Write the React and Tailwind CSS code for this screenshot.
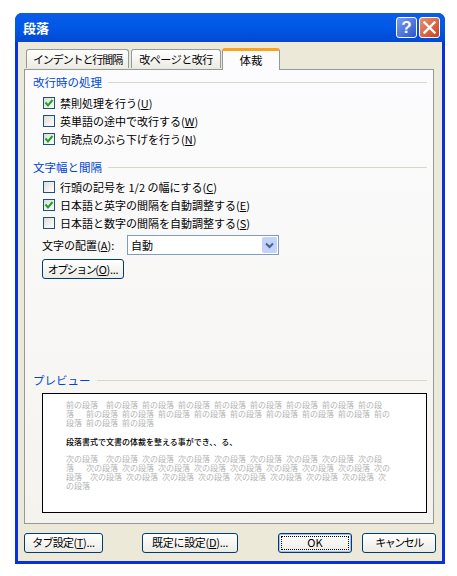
const font = { fontFamily: '"Noto Sans CJK JP", "Liberation Sans", sans-serif' };

function Check({ checked, children }) {
  return (
    <div className="flex h-[18px] items-center pl-[10px]">
      <span className="flex h-[12px] w-[12px] flex-none items-center justify-center border border-[#1c5180] bg-gradient-to-br from-[#dcdcd7] to-white">
        {checked && (
          <svg width="10" height="10" viewBox="0 0 10 10">
            <path d="M1.5 4.5 L4 7.5 L8.5 2" fill="none" stroke="#21a121" strokeWidth="2" />
          </svg>
        )}
      </span>
      <span className="ml-[5px] whitespace-nowrap text-[11px] leading-[18px] text-black">{children}</span>
    </div>
  );
}

function Legend({ children }) {
  return (
    <div className="flex h-[16px] items-center">
      <span className="whitespace-nowrap text-[11.5px] leading-[16px] text-[#0046d5]">{children}</span>
      <span className="ml-[6px] h-px flex-1 bg-[#d8d8c8]" />
    </div>
  );
}

function Btn({ className, children }) {
  return (
    <button className={"flex h-[20px] items-center justify-center whitespace-nowrap rounded-[3px] border border-[#003c74] bg-gradient-to-b from-white to-[#ecebe5] text-[11px] leading-none text-black " + className}>
      {children}
    </button>
  );
}

function U({ children }) {
  return <span className="underline">{children}</span>;
}

function PLine({ children, black }) {
  return (
    <div className={"h-[9px] whitespace-pre text-[8px] leading-[9px] [word-spacing:2.2px] " + (black ? "font-medium text-black" : "text-[#b4b4b4]")}>
      {children}
    </div>
  );
}

export default function App() {
  const a = "前の段落 ";
  const b = "次の段落 ";
  return (
    <div className="h-[576px] w-[457px] overflow-hidden bg-white pl-[15px] pt-[13px]" style={font}>
      <div className="flex h-[551px] w-[430px] flex-col overflow-hidden rounded-t-[7px] bg-[#0831d9] px-[3px] pb-[3px]">
        <div className="-mx-[3px] flex h-[29px] flex-none items-center justify-between bg-gradient-to-b from-[#0a5de8] via-[#0058e6] to-[#0348d0] pl-[8px] pr-[5px]">
          <span className="text-[13px] font-bold leading-none text-white">段落</span>
          <div className="flex gap-[2px]">
            <span className="flex h-[21px] w-[21px] items-center justify-center rounded-[3px] border border-white bg-gradient-to-br from-[#7c9cf0] to-[#2a55cf] text-[17px] font-bold leading-none text-white" style={{ fontFamily: '"Liberation Sans", sans-serif' }}>?</span>
            <span className="flex h-[21px] w-[21px] items-center justify-center rounded-[3px] border border-white bg-gradient-to-br from-[#e8906f] to-[#c8401a]">
              <svg width="13" height="13" viewBox="0 0 13 13">
                <path d="M1.5 1.5 L11.5 11.5 M11.5 1.5 L1.5 11.5" stroke="white" strokeWidth="2.4" strokeLinecap="square" />
              </svg>
            </span>
          </div>
        </div>

        <div className="flex flex-1 flex-col bg-[#ece9d8] px-[6px]">
          <div className="relative z-10 flex h-[27px] flex-none items-end pl-[2px]">
            <div className="mb-px flex h-[19px] w-[103px] items-center justify-center whitespace-nowrap rounded-t-[3px] border border-b-0 border-[#919b9c] bg-gradient-to-b from-white to-[#ecebe5] text-[11px] tracking-[-1.1px] text-black">インデントと行間隔</div>
            <div className="mb-px ml-[2px] flex h-[19px] w-[90px] items-center justify-center whitespace-nowrap rounded-t-[3px] border border-b-0 border-[#919b9c] bg-gradient-to-b from-white to-[#ecebe5] text-[11px] tracking-[-0.5px] text-black">改ページと改行</div>
            <div className="-mb-px ml-px flex h-[22px] w-[58px] items-center justify-center rounded-t-[3px] border-x border-t-[3px] border-x-[#919b9c] border-t-[#f9a31b] bg-[#fcfcfe] text-[11.5px] text-black">体裁</div>
          </div>

          <div className="flex h-[455px] w-[410px] flex-none flex-col border border-[#919b9c] bg-gradient-to-b from-[#fcfcfe] to-[#f4f3ee] pl-[8px] pr-[6px] pt-[4px]">
            <Legend>改行時の処理</Legend>
            <div className="mt-[4px]">
              <Check checked>禁則処理を行う(<U>U</U>)</Check>
              <Check>英単語の途中で改行する(<U>W</U>)</Check>
              <Check checked>句読点のぶら下げを行う(<U>N</U>)</Check>
            </div>

            <div className="mt-[11px]">
              <Legend>文字幅と間隔</Legend>
            </div>
            <div className="mt-[3px]">
              <Check>行頭の記号を 1/2 の幅にする(<U>C</U>)</Check>
              <Check checked>日本語と英字の間隔を自動調整する(<U>E</U>)</Check>
              <Check>日本語と数字の間隔を自動調整する(<U>S</U>)</Check>
            </div>

            <div className="mt-[3px] flex h-[20px] items-center pl-[9px]">
              <span className="w-[85px] whitespace-nowrap text-[11px] text-black">文字の配置(<U>A</U>):</span>
              <div className="flex h-[20px] w-[152px] items-center justify-between border border-[#7f9db9] bg-white pl-[3px] pr-px">
                <span className="text-[11px] text-black">自動</span>
                <span className="flex h-[16px] w-[15px] items-center justify-center rounded-[2px] bg-[#c1d3fb]">
                  <svg width="9" height="7" viewBox="0 0 9 7">
                    <path d="M1 1.5 L4.5 5 L8 1.5" fill="none" stroke="#4d6185" strokeWidth="2" />
                  </svg>
                </span>
              </div>
            </div>

            <div className="mt-[4px] pl-[9px]">
              <Btn className="w-[82px] tracking-[-0.3px]"><span className="tracking-[-1.5px]">オプション</span>(<U>O</U>)...</Btn>
            </div>

            <div className="mt-[93px]">
              <Legend>プレビュー</Legend>
            </div>

            <div className="ml-[9px] mt-[5px] h-[120px] w-[385px] border-[1.5px] border-black bg-white pl-[23px] pt-[6px]">
              <PLine>{"前の段落  " + a.repeat(7) + "前の段"}</PLine>
              <PLine>{"落   " + a.repeat(8) + "前の"}</PLine>
              <PLine>{"段落 " + a + a}</PLine>
              <div className="h-[10px]" />
              <PLine black>段落書式で文書の体裁を整える事ができ、、る、</PLine>
              <div className="h-[8px]" />
              <PLine>{"次の段落  " + b.repeat(7) + "次の段"}</PLine>
              <PLine>{"落   " + b.repeat(8) + "次の"}</PLine>
              <PLine>{"段落  " + b.repeat(8) + "次"}</PLine>
              <PLine>の段落</PLine>
            </div>
          </div>

          <div className="flex flex-1 items-center justify-between pb-[1px] pt-[1px]">
            <div className="flex">
              <Btn className="w-[79px] tracking-[-0.3px]"><span className="tracking-[-0.7px]">タブ設定</span>(<U>T</U>)...</Btn>
              <Btn className="ml-[39px] w-[96px] tracking-[-0.3px]">既定に設定(<U>D</U>)...</Btn>
            </div>
            <div className="flex gap-[10px]">
              <Btn className="w-[74px] border-[#003c74] p-[2px] ring-1 ring-inset ring-[#a8c0ee]">
                <span className="flex h-full w-full items-center justify-center border border-dotted border-black">OK</span>
              </Btn>
              <Btn className="w-[74px] tracking-[-1.5px]">キャンセル</Btn>
            </div>
          </div>
        </div>
      </div>
    </div>
  );
}
